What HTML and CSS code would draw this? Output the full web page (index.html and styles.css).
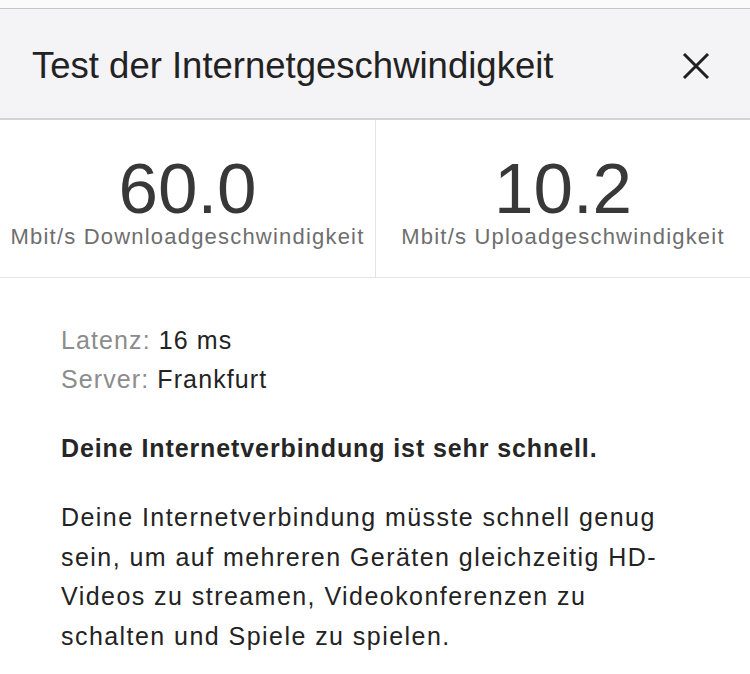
FILE: index.html
```html
<!DOCTYPE html>
<html lang="de">
<head>
<meta charset="utf-8">
<title>Test der Internetgeschwindigkeit</title>
<link rel="stylesheet" href="styles.css">
</head>
<body>
<div class="topband"></div>
<header class="header">
  <h1 class="title">Test der Internetgeschwindigkeit</h1>
  <button class="close" aria-label="Schließen">
    <svg width="28" height="28" viewBox="0 0 28 28"><path d="M2 2 L26 26 M26 2 L2 26" stroke="#1f1f1f" stroke-width="3" stroke-linecap="butt" fill="none"/></svg>
  </button>
</header>
<section class="stats">
  <div class="stat">
    <div class="value">60.0</div>
    <div class="unit">Mbit/s Downloadgeschwindigkeit</div>
  </div>
  <div class="stat">
    <div class="value">10.2</div>
    <div class="unit">Mbit/s Uploadgeschwindigkeit</div>
  </div>
</section>
<main class="content">
  <div class="meta">
    <div class="row"><span class="key">Latenz:</span> 16 ms</div>
    <div class="row"><span class="key">Server:</span> Frankfurt</div>
  </div>
  <p class="verdict">Deine Internetverbindung ist sehr schnell.</p>
  <p class="desc">Deine Internetverbindung müsste schnell genug<br>sein, um auf mehreren Geräten gleichzeitig HD-<br>Videos zu streamen, Videokonferenzen zu<br>schalten und Spiele zu spielen.</p>
</main>
</body>
</html>
```
FILE: styles.css
```css
* { box-sizing: border-box; }
html, body {
  margin: 0;
  padding: 0;
  background: #ffffff;
  font-family: "Liberation Sans", Arial, sans-serif;
  color: #262626;
}
.topband {
  height: 9px;
  background: #fafafa;
  border-bottom: 1px solid #c6c6c8;
}
.header {
  height: 111px;
  background: #f4f3f6;
  border-bottom: 2px solid #d3d3d6;
  display: flex;
  align-items: center;
  justify-content: space-between;
  padding: 4px 40px 0 32px;
}
.title {
  margin: 0;
  font-size: 36.5px;
  font-weight: 400;
  color: #222222;
  line-height: 1.2;
}
.close {
  border: 0;
  padding: 0;
  background: transparent;
  width: 28px;
  height: 28px;
  display: flex;
}
.stats {
  display: grid;
  grid-template-columns: 375px 1fr;
  border-bottom: 1px solid #e4e4e6;
  height: 158px;
}
.stat {
  display: flex;
  flex-direction: column;
  align-items: center;
  padding-top: 34px;
}
.stat + .stat { border-left: 1px solid #e4e4e6; }
.value {
  font-size: 71px;
  line-height: 70px;
  color: #383838;
}
.unit {
  font-size: 22px;
  line-height: 26px;
  letter-spacing: 1.2px;
  color: #6e6e6e;
}
.content {
  padding: 43px 40px 0 61px;
  font-size: 25px;
  letter-spacing: 1.1px;
  color: #232323;
}
.row { line-height: 39px; }
.key { color: #8c8c8c; }
.verdict {
  margin: 30px 0 0;
  font-weight: 700;
  line-height: 39px;
  letter-spacing: 0.9px;
  color: #262626;
}
.desc {
  margin: 30px 0 0;
  line-height: 39.5px;
  letter-spacing: 1.45px;
}
```
